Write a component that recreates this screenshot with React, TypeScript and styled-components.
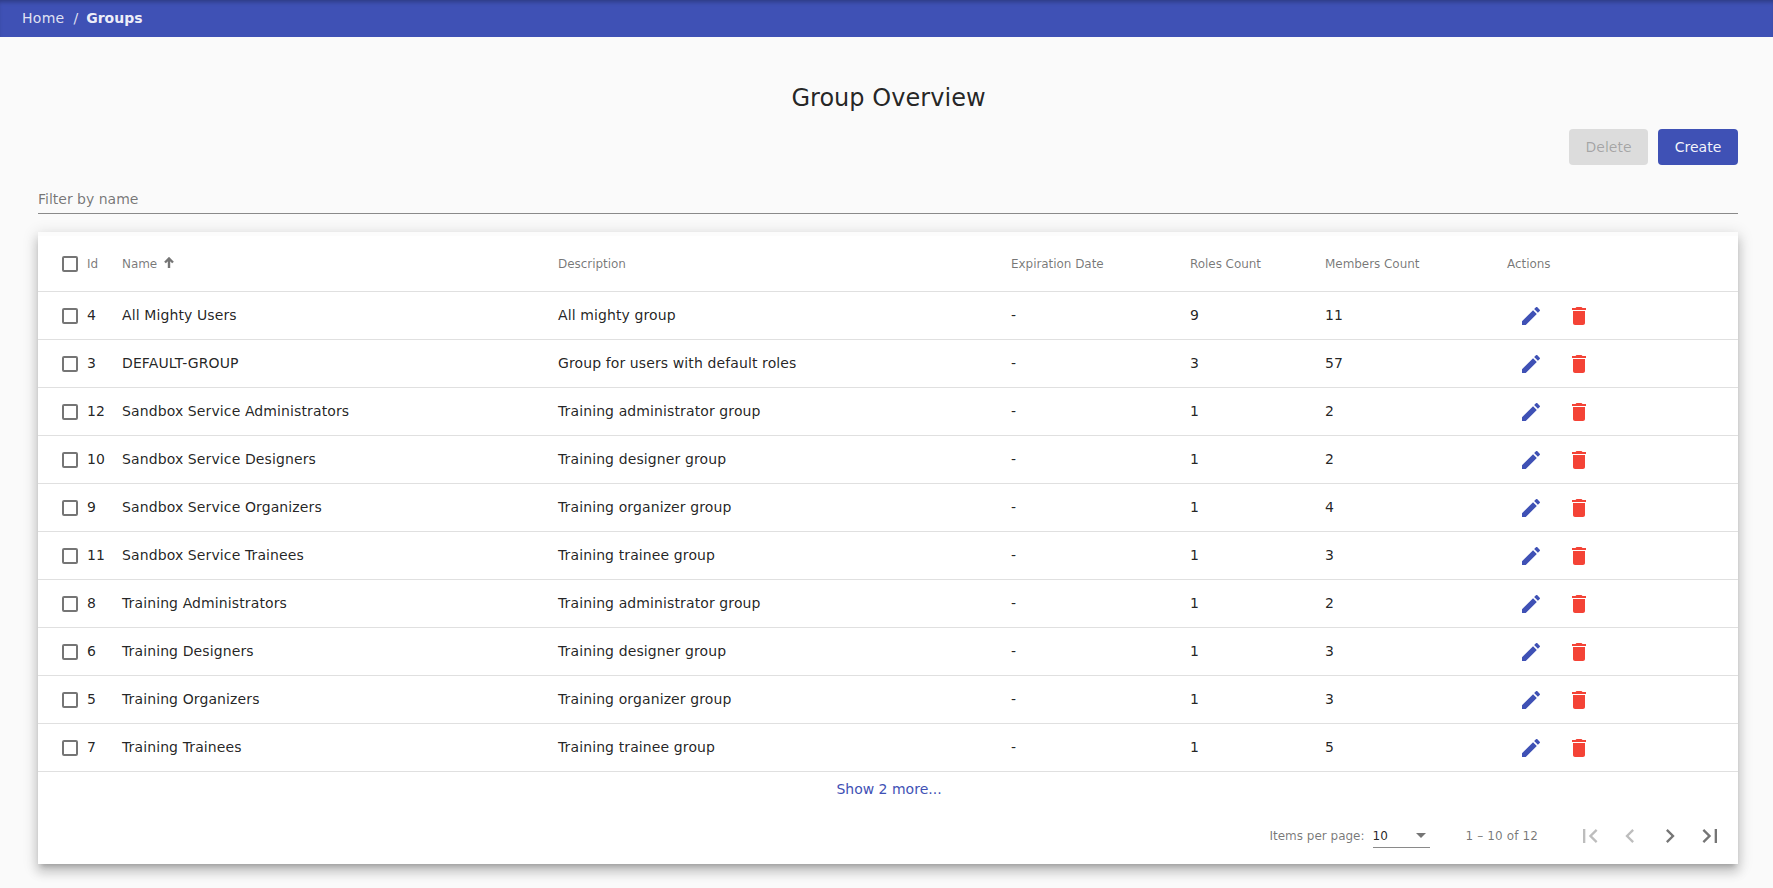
import React from "react";
import styled, { createGlobalStyle } from "styled-components";

const Global = createGlobalStyle`
  html, body { margin: 0; padding: 0; background: #fafafa; }
  body { font-family: "DejaVu Sans", sans-serif; color: rgba(0,0,0,.87); overflow: hidden; }
`;

const Page = styled.div`width: 1773px; height: 888px; overflow: hidden;`;
const TopBar = styled.header`
  height: 37px; background: #3f51b5; display: flex; align-items: center;
  padding: 0 22px 2px; box-sizing: border-box; font-size: 14px;
  box-shadow: inset 0 4px 4px -2px rgba(0,0,0,.28);
`;
const Crumb = styled.span<{ $current?: boolean }>`
  font-weight: ${p => (p.$current ? 700 : 400)};
  letter-spacing: ${p => (p.$current ? "0" : ".02em")};
  color: ${p => (p.$current ? "rgba(255,255,255,.92)" : "rgba(255,255,255,.85)")};
`;
const Separator = styled.span`margin: 0 8px 0 9px; color: rgba(255,255,255,.85);`;
const Main = styled.main`padding: 0 35px 0 38px;`;
const Title = styled.h1`
  margin: 0; padding: 45px 0 0 1px; height: 92px; box-sizing: border-box; text-align: center;
  font-size: 24px; line-height: 32px; font-weight: 400; letter-spacing: .04px;
`;
const Controls = styled.div`display: flex; justify-content: flex-end; gap: 10px;`;
const Button = styled.button<{ $primary?: boolean }>`
  width: ${p => (p.$primary ? 80 : 79)}px; height: 36px; border: 0; border-radius: 4px; padding: 0;
  font: 14px "DejaVu Sans", sans-serif;
  background: ${p => (p.$primary ? "#3f51b5" : "#dcdcdc")};
  color: ${p => (p.$primary ? "rgba(255,255,255,.95)" : "rgba(0,0,0,.26)")};
`;
const Filter = styled.div`
  margin-top: 22px; height: 27px; box-sizing: border-box; border-bottom: 1px solid #8a8a8a;
  font-size: 14px; line-height: 24px; color: rgba(0,0,0,.54);
`;
const Card = styled.section`
  margin-top: 18px; height: 632px; box-sizing: border-box; border-top: 4px solid #fcfcfc;
  background: #fff; display: flex; flex-direction: column;
  box-shadow: 0 5px 5px -3px rgba(0,0,0,.2), 0 8px 10px 1px rgba(0,0,0,.14), 0 3px 14px 2px rgba(0,0,0,.12);
`;
const Grid = styled.div`
  display: grid; align-items: center; box-sizing: border-box; padding-left: 24px;
  grid-template-columns: 25px 35px 436px 453px 179px 135px 182px 1fr;
  border-bottom: 1px solid #e0e0e0;
`;
const HeadRow = styled(Grid)`
  height: 56px; font-size: 12px; letter-spacing: -.05px; color: rgba(0,0,0,.54);
`;
const Row = styled(Grid)`height: 48px; font-size: 14px; letter-spacing: .11px;`;
const Cell = styled.span`padding-bottom: 2px;`;
const Box = styled.span`
  display: block; width: 12px; height: 12px; border: 2px solid rgba(0,0,0,.54); border-radius: 2px;
`;
const NameHead = styled.span`display: flex; align-items: center; gap: 7px;`;
const SortArrow = styled.svg`display: block; width: 10px; height: 11px; margin-top: -2px; color: rgba(0,0,0,.54);`;
const Actions = styled.div`display: flex;`;
const IconButton = styled.span<{ $color: string }>`
  display: flex; width: 48px; height: 40px; align-items: center; justify-content: center; color: ${p => p.$color};
`;
const More = styled.div`
  height: 33px; padding-left: 2px; display: flex; align-items: center; justify-content: center;
  font-size: 14px; color: #3f51b5;
`;
const Paginator = styled.div`
  flex: 1; display: flex; align-items: center; justify-content: flex-end; padding: 3px 8px 0 0;
  font-size: 12px; color: rgba(0,0,0,.54);
`;
const Select = styled.div`
  width: 57px; height: 24px; margin-left: 8px; box-sizing: border-box; border-bottom: 1px solid #8a8a8a;
  display: flex; align-items: center; justify-content: space-between; padding-right: 4px;
  color: rgba(0,0,0,.87);
`;
const Caret = styled.span`
  width: 0; height: 0; border-left: 5px solid transparent; border-right: 5px solid transparent;
  border-top: 5px solid rgba(0,0,0,.54);
`;
const Range = styled.span`margin: 0 32px 0 36px; letter-spacing: .12px;`;
const PageButton = styled.span<{ $off?: boolean }>`
  display: flex; width: 40px; height: 40px; align-items: center; justify-content: center;
  color: ${p => (p.$off ? "rgba(0,0,0,.26)" : "rgba(0,0,0,.54)")};
`;

const Icon = ({ d, size = 24 }: { d: string; size?: number }) => (
  <svg width={size} height={size} viewBox="0 0 24 24" fill="currentColor"><path d={d} /></svg>
);
const EDIT = "M3 17.25V21h3.75L17.81 9.94l-3.75-3.75L3 17.25zM20.71 7.04c.39-.39.39-1.02 0-1.41l-2.34-2.34c-.39-.39-1.02-.39-1.41 0l-1.83 1.83 3.75 3.75 1.83-1.83z";
const TRASH = "M6 19c0 1.1.9 2 2 2h8c1.1 0 2-.9 2-2V7H6v12zM19 4h-3.5l-1-1h-5l-1 1H5v2h14V4z";
const FIRST = "M18.41 16.59L13.82 12l4.59-4.59L17 6l-6 6 6 6zM6 6h2v12H6z";
const PREV = "M15.41 7.41L14 6l-6 6 6 6 1.41-1.41L10.83 12z";
const NEXT = "M10 6L8.59 7.41 13.17 12l-4.58 4.59L10 18l6-6z";
const LAST = "M5.59 7.41L10.18 12l-4.59 4.59L7 18l6-6-6-6zM16 6h2v12h-2z";

const rows: [number, string, string, number, number][] = [
  [4, "All Mighty Users", "All mighty group", 9, 11],
  [3, "DEFAULT-GROUP", "Group for users with default roles", 3, 57],
  [12, "Sandbox Service Administrators", "Training administrator group", 1, 2],
  [10, "Sandbox Service Designers", "Training designer group", 1, 2],
  [9, "Sandbox Service Organizers", "Training organizer group", 1, 4],
  [11, "Sandbox Service Trainees", "Training trainee group", 1, 3],
  [8, "Training Administrators", "Training administrator group", 1, 2],
  [6, "Training Designers", "Training designer group", 1, 3],
  [5, "Training Organizers", "Training organizer group", 1, 3],
  [7, "Training Trainees", "Training trainee group", 1, 5],
];

export default function App() {
  return (
    <Page>
      <Global />
      <TopBar><Crumb>Home</Crumb><Separator>/</Separator><Crumb $current>Groups</Crumb></TopBar>
      <Main>
        <Title>Group Overview</Title>
        <Controls>
          <Button>Delete</Button>
          <Button $primary>Create</Button>
        </Controls>
        <Filter>Filter by name</Filter>
        <Card>
          <HeadRow>
            <Box /><span>Id</span>
            <NameHead>
              Name
              <SortArrow viewBox="0 0 10 11" fill="none" stroke="currentColor" strokeWidth="2.4">
                <path d="M5 11V1.5M1 5.5L5 1.5L9 5.5" />
              </SortArrow>
            </NameHead>
            <span>Description</span><span>Expiration Date</span><span>Roles Count</span><span>Members Count</span><span>Actions</span>
          </HeadRow>
          {rows.map(([id, name, desc, r, m]) => (
            <Row key={id}>
              <Box /><Cell>{id}</Cell><Cell>{name}</Cell><Cell>{desc}</Cell><Cell>-</Cell><Cell>{r}</Cell><Cell>{m}</Cell>
              <Actions>
                <IconButton $color="#3f51b5"><Icon d={EDIT} /></IconButton>
                <IconButton $color="#f44336"><Icon d={TRASH} /></IconButton>
              </Actions>
            </Row>
          ))}
          <More>Show 2 more...</More>
          <Paginator>
            Items per page:
            <Select>10<Caret /></Select>
            <Range>1 – 10 of 12</Range>
            <PageButton $off><Icon d={FIRST} size={28} /></PageButton>
            <PageButton $off><Icon d={PREV} size={28} /></PageButton>
            <PageButton><Icon d={NEXT} size={28} /></PageButton>
            <PageButton><Icon d={LAST} size={28} /></PageButton>
          </Paginator>
        </Card>
      </Main>
    </Page>
  );
}
